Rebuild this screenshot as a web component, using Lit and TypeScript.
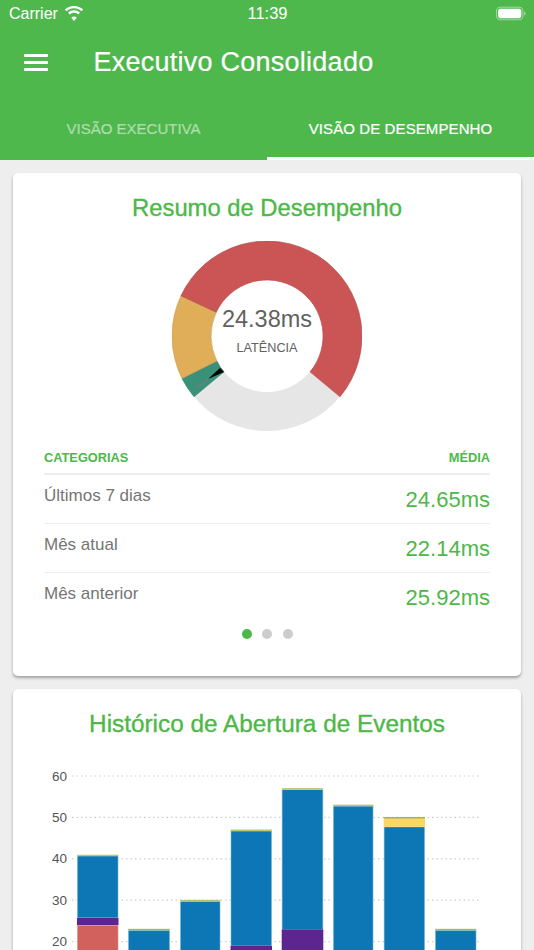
import { LitElement, html, css, svg } from "lit";
import { customElement } from "lit/decorators.js";

const CX = 95, CY = 95;
function seg(a1: number, a2: number, r1 = 95, r2 = 56) {
  const p = (a: number, r: number) => {
    const t = (a * Math.PI) / 180;
    return `${(CX + r * Math.cos(t)).toFixed(2)} ${(CY + r * Math.sin(t)).toFixed(2)}`;
  };
  const large = Math.abs(a2 - a1) > 180 ? 1 : 0;
  return `M${p(a1, r1)}A${r1} ${r1} 0 ${large} 1 ${p(a2, r1)}L${p(a2, r2)}A${r2} ${r2} 0 ${large} 0 ${p(a1, r2)}Z`;
}

const blue = "#0d76b4", blueEdge = "#a9d4e8", purple = "#5d2590";
const bars: { x: number; w: number; parts: [number, number, string, string][] }[] = [
  { x: 77, w: 41.5, parts: [[0, 24, "#d2605c", "#e9b3b0"], [24, 25.8, purple, purple], [25.8, 40.8, blue, blueEdge], [40.8, 41, "#a8c04a", "#c4d488"]] },
  { x: 128, w: 42, parts: [[0, 22.8, blue, blueEdge], [22.8, 23.1, "#7fae52", "#b7cf7a"]] },
  { x: 180, w: 40.5, parts: [[0, 29.8, blue, blueEdge], [29.8, 30.1, "#a8b85a", "#c8d088"]] },
  { x: 230.5, w: 41.5, parts: [[0, 19, purple, purple], [19, 46.8, blue, blueEdge], [46.8, 47.1, "#a8c04a", "#c4d488"]] },
  { x: 281.7, w: 41.6, parts: [[0, 23, purple, purple], [23, 56.8, blue, blueEdge], [56.8, 57.1, "#a8c04a", "#c4d488"]] },
  { x: 333, w: 40.5, parts: [[0, 52.8, blue, blueEdge], [52.8, 53.1, "#a8b85a", "#c8d088"]] },
  { x: 383.7, w: 41.3, parts: [[0, 47.8, blue, blueEdge], [47.8, 49.8, "#ffd660", "#ffd660"], [49.8, 50.1, "#a8b84a", "#a8b84a"]] },
  { x: 435, w: 41.5, parts: [[0, 22.8, blue, blueEdge], [22.8, 23.1, "#7fae52", "#b7cf7a"]] },
];
const Y = (v: number) => 38 + (60 - v) * 4.14;

@customElement("app-root")
export class AppRoot extends LitElement {
  static styles = css`
    :host { display: block; width: 534px; height: 950px; overflow: hidden; background: #eeeeee;
      font-family: "Liberation Sans", Arial, sans-serif; }
    .top { background: #4fb84d; color: #fff; height: 160px; display: flex; flex-direction: column; }
    .status { height: 27px; display: grid; grid-template-columns: 1fr auto 1fr; align-items: center;
      padding: 0 8px 0 9px; font-size: 16px; box-sizing: border-box; }
    .carrier { display: flex; align-items: center; gap: 6px; }
    .time { font-size: 16.5px; }
    .battery { justify-self: end; display: block; }
    .bar { height: 70px; display: flex; align-items: center; padding-left: 24px; }
    .bar h1 { margin: 0 0 0 45.5px; font-size: 27px; font-weight: 400; letter-spacing: 0.25px;
      -webkit-text-stroke: 0.2px currentColor; }
    .menu { display: flex; flex-direction: column; gap: 4px; width: 24px; }
    .menu i { display: block; height: 3px; background: #fff; border-radius: 1px; }
    .tabs { flex: 1; display: flex; }
    .tab { flex: 1; display: flex; align-items: center; justify-content: center; font-size: 15px;
      color: rgba(255,255,255,.5); box-sizing: border-box; padding-top: 2px; border-bottom: 3px solid transparent;
      -webkit-text-stroke: 0.2px currentColor; }
    .tab.on { color: #fff; border-bottom-color: #fff; letter-spacing: 0.1px; }
    .content { padding: 13px 13px 0; display: flex; flex-direction: column; gap: 13px; }
    .card { background: #fff; border-radius: 5px; box-shadow: 0 2px 3px rgba(0,0,0,.32); }
    .c1 { height: 503px; padding: 0 31px; box-sizing: border-box; display: flex; flex-direction: column; }
    h2 { margin: 0; padding-top: 21px; color: #4db848; font-weight: 400; text-align: center; line-height: 28px;
      -webkit-text-stroke: 0.35px currentColor; }
    .t1 { font-size: 23.8px; }
    .t2 { font-size: 24.35px; }
    .donut-wrap { position: relative; width: 190px; height: 190px; margin: 19px auto 0; }
    .donut-wrap svg { display: block; }
    .center { position: absolute; inset: 0; display: flex; flex-direction: column; align-items: center; color: #616161; }
    .val { font-size: 23.5px; margin-top: 64px; line-height: 28px; }
    .lbl { font-size: 12.7px; margin-top: 7px; line-height: 16px; }
    .thead { display: flex; justify-content: space-between; margin-top: 19px; padding-bottom: 6.5px;
      border-bottom: 2.5px solid #eeeeee; color: #4db848; font-size: 12.8px; font-weight: 700; line-height: 16px; }
    .row { height: 49px; box-sizing: border-box; display: flex; justify-content: space-between;
      border-bottom: 1px solid #eeeeee; }
    .row.last { border-bottom: none; }
    .row span { color: #757575; font-size: 17px; line-height: 20px; padding-top: 11px; }
    .row b { color: #4db848; font-size: 22px; font-weight: 400; line-height: 26px; padding-top: 12.5px; }
    .dots { display: flex; justify-content: center; gap: 10.5px; margin-top: 7.5px; }
    .dots i { width: 10px; height: 10px; border-radius: 50%; background: #cccccc; }
    .dots i.on { background: #4db848; }
    .c2 { height: 400px; }
    .chart { display: block; }
    .chart text { font-size: 13.5px; fill: #555; font-family: "Liberation Sans", Arial, sans-serif; }
  `;

  render() {
    return html`
      <div class="top">
        <div class="status">
          <div class="carrier">Carrier
            <svg width="20" height="15" viewBox="0 0 18 14"><path fill="#fff" d="M9 2.2c2.700 0 5.200 1.100 7 2.800l1.500-1.700C15.300 1.200 12.300 0 9 0S2.700 1.200.5 3.300L2 5c1.800-1.700 4.300-2.800 7-2.800zM9 6.300c1.500 0 2.900.6 4 1.600l1.500-1.700C13 4.800 11.100 4 9 4s-4 .8-5.500 2.200L5 7.900c1.100-1 2.500-1.600 4-1.600zM9 9.900c-1 0-1.900.4-2.600 1L9 14l2.600-3.100c-.7-.6-1.600-1-2.600-1z"/></svg>
          </div>
          <div class="time">11:39</div>
          <svg class="battery" width="30" height="15" viewBox="0 0 29 14">
            <rect x=".5" y="1" width="25.500" height="12" rx="3.500" fill="none" stroke="rgba(255,255,255,.45)"/>
            <rect x="2" y="2.500" width="22.500" height="9" rx="2" fill="#fff"/>
            <path d="M27.200 5v4c.8-.3 1.300-1.100 1.300-2s-.5-1.700-1.300-2z" fill="rgba(255,255,255,.5)"/>
          </svg>
        </div>
        <div class="bar">
          <div class="menu"><i></i><i></i><i></i></div>
          <h1>Executivo Consolidado</h1>
        </div>
        <div class="tabs">
          <div class="tab">VISÃO EXECUTIVA</div>
          <div class="tab on">VISÃO DE DESEMPENHO</div>
        </div>
      </div>
      <div class="content">
        <div class="card c1">
          <h2 class="t1">Resumo de Desempenho</h2>
          <div class="donut-wrap">
            <svg width="190" height="190" viewBox="0 0 190 190">
              <path d="${seg(39.8, 140.2)}" fill="#e6e6e6"/>
              <path d="${seg(140.2, 153.5)}" fill="#3a917a" stroke="#2f7f69" stroke-width=".6"/>
              <path d="${seg(153.5, 205.1)}" fill="#e0ad58" stroke="#c99a4c" stroke-width=".6"/>
              <path d="${seg(205.1, 399.8)}" fill="#cb5555" stroke="#ad4646" stroke-width=".6"/>
              <path d="M36 138L48 127L52 131Z" fill="#000"/>
              <path d="M24.700 146.700L37 137.500" stroke="#b06a80" stroke-width=".8"/>
            </svg>
            <div class="center">
              <div class="val">24.38ms</div>
              <div class="lbl">LATÊNCIA</div>
            </div>
          </div>
          <div class="thead"><div>CATEGORIAS</div><div>MÉDIA</div></div>
          <div class="row"><span>Últimos 7 dias</span><b>24.65ms</b></div>
          <div class="row"><span>Mês atual</span><b>22.14ms</b></div>
          <div class="row last"><span>Mês anterior</span><b>25.92ms</b></div>
          <div class="dots"><i class="on"></i><i></i><i></i></div>
        </div>
        <div class="card c2">
          <h2 class="t2">Histórico de Abertura de Eventos</h2>
          <svg class="chart" width="508" height="212" viewBox="13 0 508 212">
            ${[60, 50, 40, 30, 20].map(
              (v) => svg`
                <line x1="72" x2="480" y1="${Y(v)}" y2="${Y(v)}" stroke="#cccccc" stroke-width="1.200" stroke-dasharray="1.500 3"/>
                <text x="67" y="${Y(v) + 4.5}" text-anchor="end">${v}</text>`
            )}
            ${bars.map((b) =>
              b.parts.map(
                ([lo, hi, fill, stroke]) => svg`
                  <rect x="${b.x}" y="${Y(hi)}" width="${b.w}" height="${Math.max(1.5, Y(lo) - Y(hi))}" fill="${stroke}"/>
                  <rect x="${b.x + 0.7}" y="${Y(hi) + 0.7}" width="${b.w - 1.4}" height="${Math.max(0.5, Y(lo) - Y(hi) - 0.7)}" fill="${fill}"/>`
              )
            )}
          </svg>
        </div>
      </div>
    `;
  }
}
